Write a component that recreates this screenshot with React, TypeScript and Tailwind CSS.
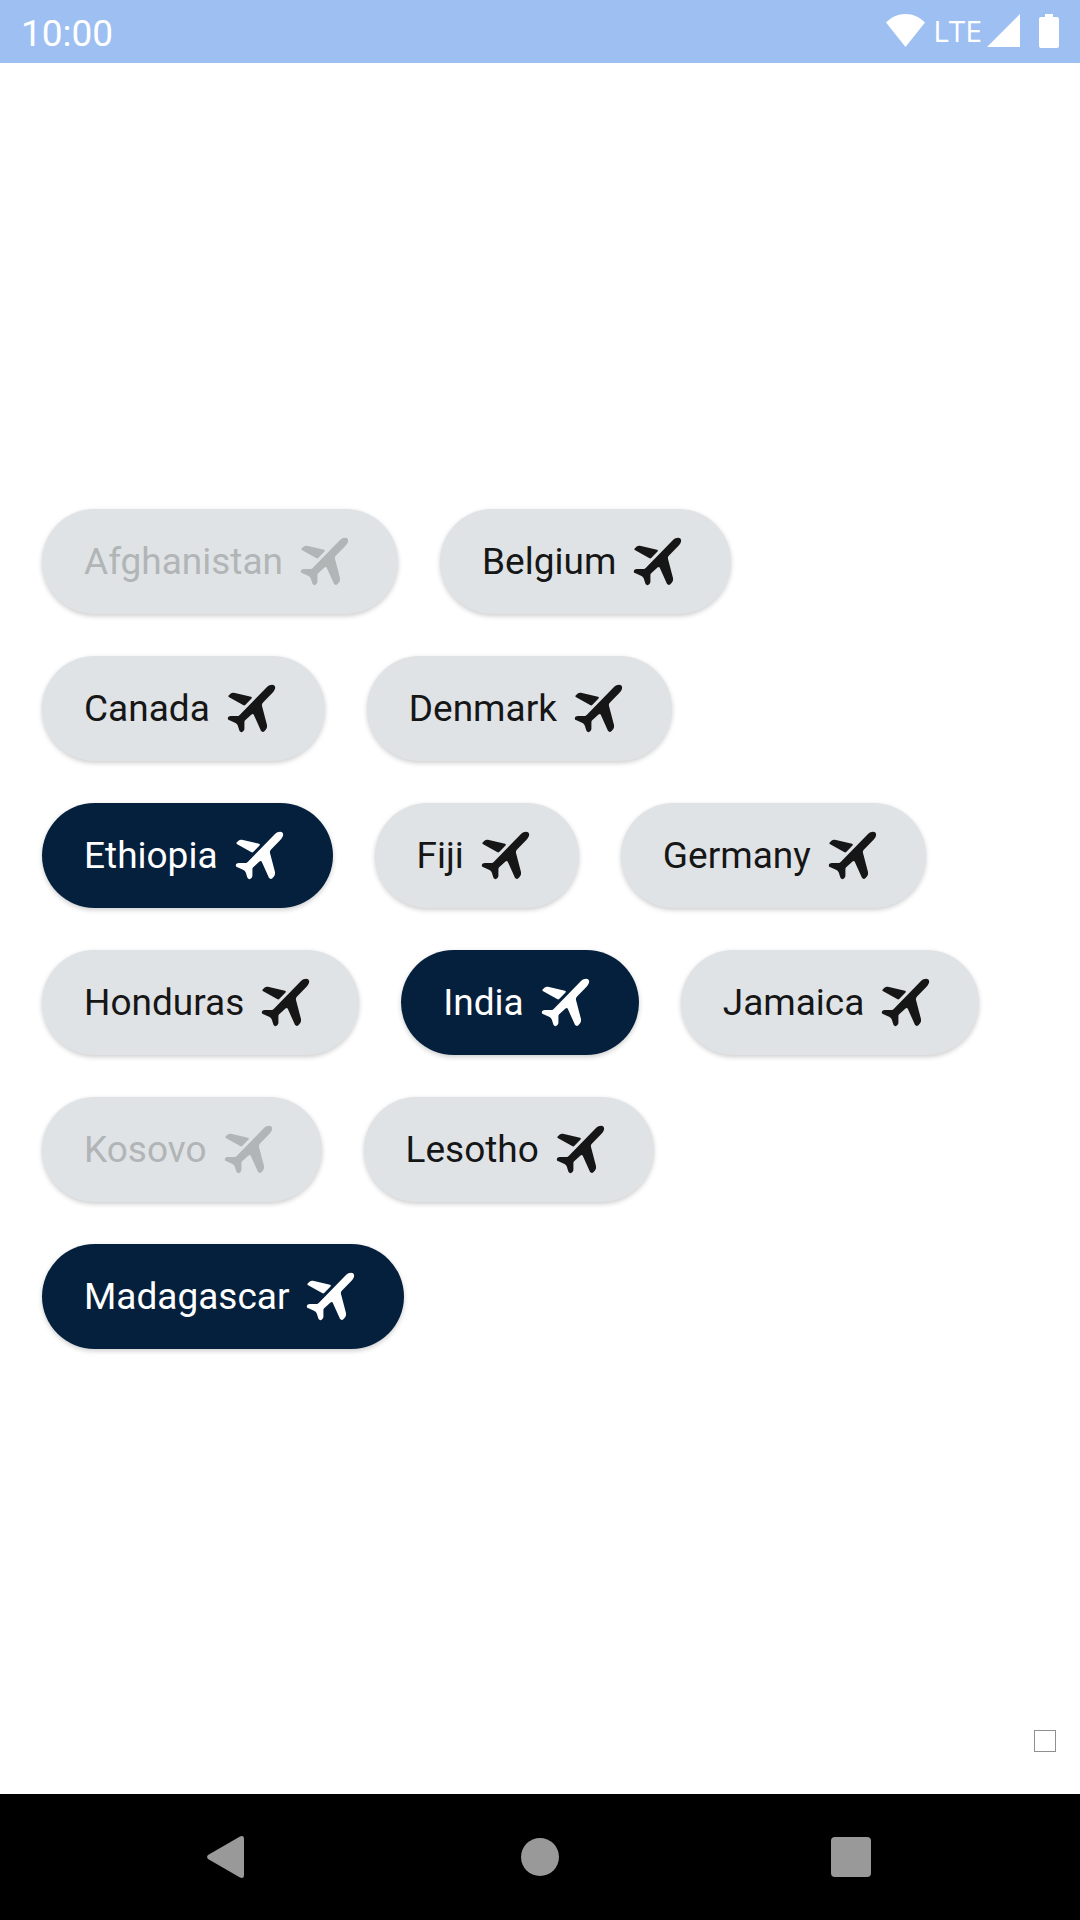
import { useState } from "react";
import clsx from "clsx";

type Country = { name: string; disabled?: boolean; selected?: boolean };

const COUNTRIES: Country[] = [
  { name: "Afghanistan", disabled: true },
  { name: "Belgium" },
  { name: "Canada" },
  { name: "Denmark" },
  { name: "Ethiopia", selected: true },
  { name: "Fiji" },
  { name: "Germany" },
  { name: "Honduras" },
  { name: "India", selected: true },
  { name: "Jamaica" },
  { name: "Kosovo", disabled: true },
  { name: "Lesotho" },
  { name: "Madagascar", selected: true },
];

function PlaneIcon() {
  return (
    <svg viewBox="0 0 24 24" className="size-[63px] shrink-0" fill="currentColor" aria-hidden="true">
      <path d="M17.9 3.8C18.8 2.9 20.1 2.7 20.7 3.2C21.3 3.8 21 4.9 20.2 5.8L16.4 9.7C16 10.1 15.9 10.5 16 11L17.9 18.3C18 19 17.9 19.5 17.5 20L16.9 20.7C16.5 21.1 15.9 21 15.6 20.5L12.9 14.5C12.7 14 12.4 14 12 14.3L9.7 16.4C9.4 16.7 9.3 16.9 9.3 17.3V19.7C9.3 20.3 8.7 21 8.2 21C7.8 21 7.5 20.7 7.3 20.2L6.8 18.6C6.6 18 6.2 17.5 5.3 17.2L3.6 16.5C3.1 16.3 2.9 16 3 15.6C3.1 15.2 3.6 14.9 4.1 14.9H6.6C7 14.9 7.3 14.7 7.6 14.4Z" />
      <path d="M3.3 7L4.1 6.3C4.4 6 4.9 5.9 5.3 6L11.8 7.5C12.2 7.6 12.2 7.9 12 8.2L9.7 10.6C9.4 10.9 9.1 10.9 8.8 10.7L3.5 7.7C3.2 7.5 3.1 7.2 3.3 7Z" />
    </svg>
  );
}

function Chip({ name, disabled, selected }: Country) {
  const [on, setOn] = useState(Boolean(selected));
  return (
    <button
      type="button"
      disabled={disabled}
      aria-pressed={on}
      onClick={() => setOn(!on)}
      className={clsx(
        "flex h-[105px] items-center gap-[10px] rounded-full px-[42px] text-[37px] leading-[44px] shadow-[0_2px_5px_rgba(0,0,0,0.2)]",
        disabled ? "bg-[#dfe3e6] text-[#b1b5b6]" : on ? "bg-[#05203c] text-white" : "bg-[#dfe3e6] text-[#161616]",
      )}
    >
      <span className="pt-[2px]">{name}</span>
      <PlaneIcon />
    </button>
  );
}

function StatusBar() {
  return (
    <header className="flex h-[63px] items-center justify-between bg-[#9dbff2] px-[21px] text-white">
      <span className="pt-[4px] text-[37px] leading-[44px]">10:00</span>
      <div className="flex items-center pb-[2px]">
        <svg viewBox="0 0 39 33" className="mr-[8px] h-[33px] w-[39px]" fill="currentColor" aria-hidden="true">
          <path d="M0 8.5C5 3.3 12 0 19.5 0S34 3.3 39 8.5L19.5 33Z" />
        </svg>
        <span className="mr-[5px] font-['Open_Sans',sans-serif] text-[30px] leading-[44px]">LTE</span>
        <svg viewBox="0 0 33 33" className="mr-[19px] size-[33px]" fill="currentColor" aria-hidden="true">
          <path d="M33 0V33H0Z" />
        </svg>
        <svg viewBox="0 0 20 34" className="h-[34px] w-[20px]" fill="currentColor" aria-hidden="true">
          <path d="M6 0H14V3H18Q20 3 20 5V32Q20 34 18 34H2Q0 34 0 32V5Q0 3 2 3H6Z" />
        </svg>
      </div>
    </header>
  );
}

function NavBar() {
  return (
    <nav className="grid h-[126px] grid-cols-[1fr_170px_1fr] items-center bg-black text-[#999999]">
      <button type="button" aria-label="Back" className="justify-self-end">
        <svg viewBox="0 0 37 42" className="mr-[211px] h-[42px] w-[37px]" fill="currentColor" aria-hidden="true">
          <path d="M1 19L33 .5Q37-1 37 3V39Q37 43 33 41.5L1 23Q-.8 21 1 19Z" />
        </svg>
      </button>
      <button type="button" aria-label="Home" className="size-[38px] justify-self-center rounded-full bg-[#999999]" />
      <button type="button" aria-label="Recent apps" className="ml-[206px] size-[40px] rounded-[4px] bg-[#999999]" />
    </nav>
  );
}

export default function App() {
  return (
    <div className="flex min-h-screen flex-col bg-white font-[Roboto,sans-serif]">
      <StatusBar />
      <main className="relative flex grow flex-col justify-center">
        <div className="flex flex-wrap gap-[42px] pr-[84px] pl-[42px]">
          {COUNTRIES.map((country) => (
            <Chip key={country.name} {...country} />
          ))}
        </div>
        <span className="absolute right-[24px] bottom-[42px] size-[22px] border border-[#8f8f8f]" />
      </main>
      <NavBar />
    </div>
  );
}
